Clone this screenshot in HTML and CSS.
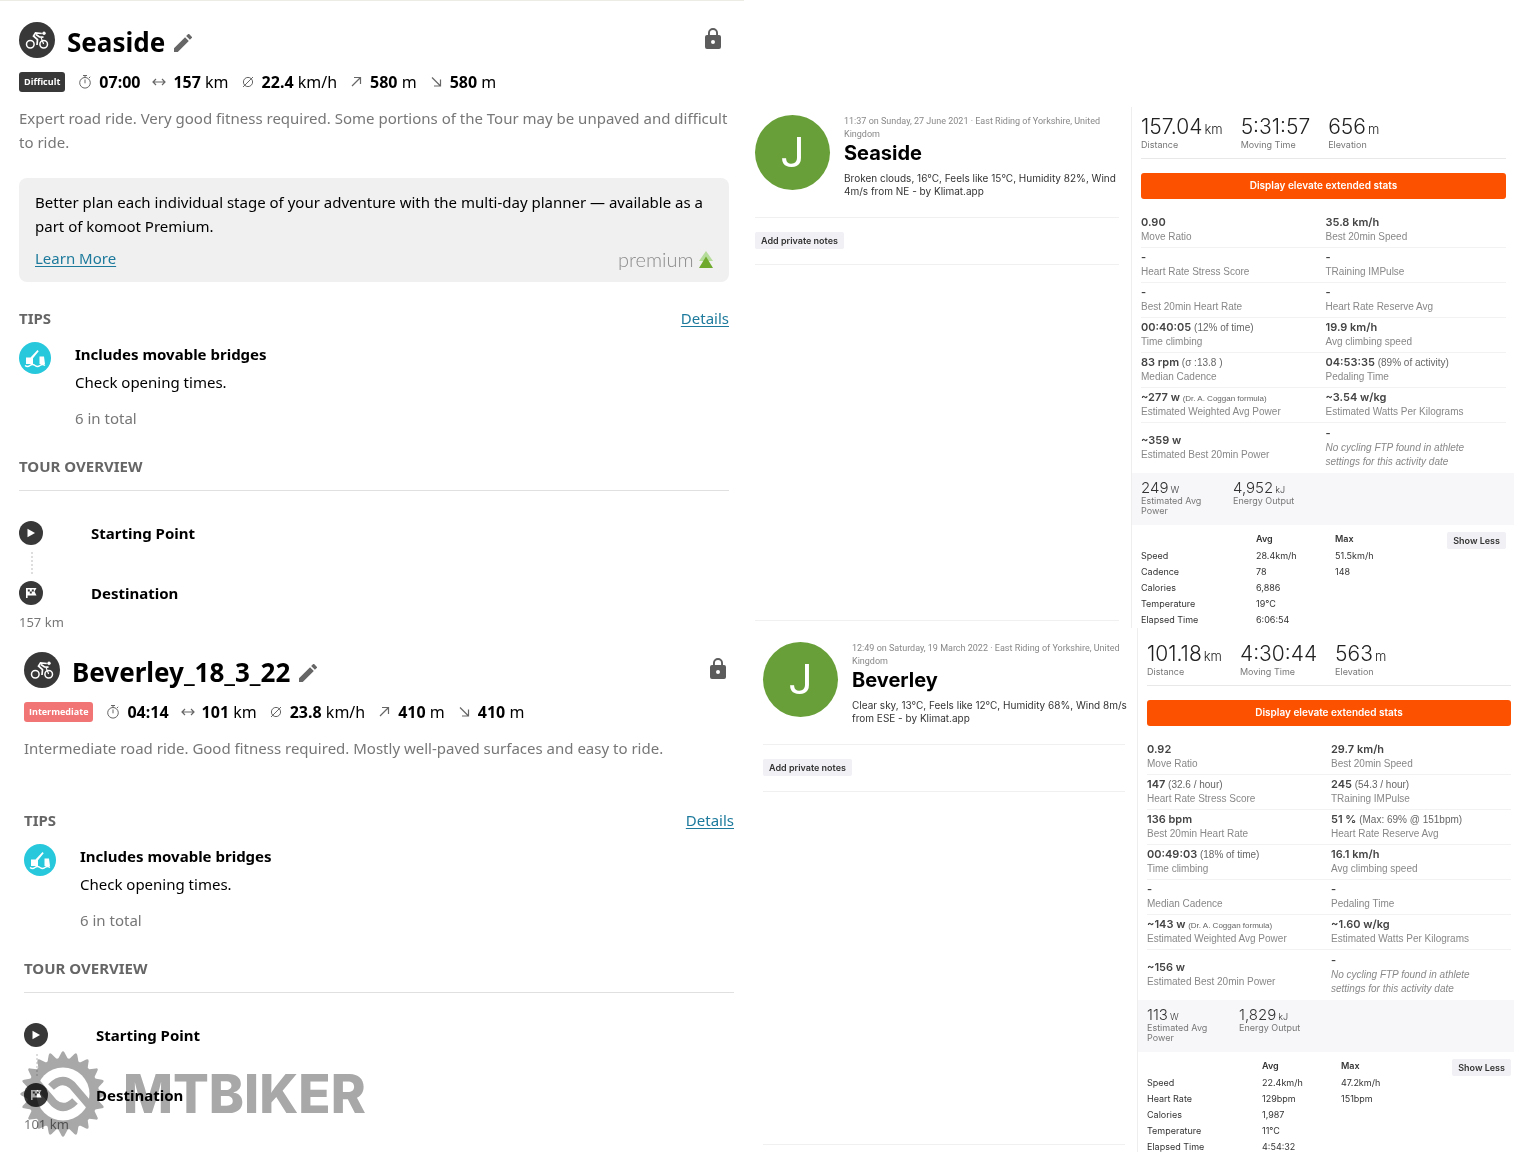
FILE: index.html
```html
<!DOCTYPE html>
<html lang="en">
<head>
  <meta charset="UTF-8" />
  <meta name="viewport" content="width=device-width, initial-scale=1.0" />
  <title>Seaside / Beverley - planned and ridden</title>
  <link rel="stylesheet" href="styles.css">
</head>
<body>

  <!-- Shared icons -->
  <svg class="sprite" aria-hidden="true">
    <symbol id="i-bike" viewBox="0 0 36 36">
      <circle cx="18" cy="18" r="18" fill="#383838"/>
      <g fill="none" stroke="#fff" stroke-width="1.5">
        <circle cx="11.3" cy="22.3" r="3.800"/>
        <circle cx="24.7" cy="22.3" r="3.800"/>
        <path d="M24.600 22 22 15.400" stroke-width="1.200"/>
        <path d="M22.800 11.500 16.500 11l-2 3 4 3.500-.5 5.500M17 12.500l3.500 2.500 4 .200" stroke-width="1.700"/>
      </g>
      <circle cx="25" cy="11.200" r="1.700" fill="#fff"/>
    </symbol>
    <symbol id="i-pencil" viewBox="3 3 18 18">
      <path d="M3 17.25V21h3.75L17.81 9.94l-3.75-3.75L3 17.25zM20.71 7.04a1 1 0 0 0 0-1.41l-2.34-2.34a1 1 0 0 0-1.41 0l-1.83 1.83 3.75 3.75 1.83-1.83z" fill="#666"/>
    </symbol>
    <symbol id="i-lock" viewBox="4 1 16 21">
      <path d="M18 8h-1V6A5 5 0 0 0 7 6v2H6a2 2 0 0 0-2 2v10a2 2 0 0 0 2 2h12a2 2 0 0 0 2-2V10a2 2 0 0 0-2-2zm-6 9a2 2 0 1 1 0-4 2 2 0 0 1 0 4zm3.1-9H8.900V6a3.100 3.100 0 0 1 6.200 0v2z" fill="#5c5c5c"/>
    </symbol>
    <symbol id="i-clock" viewBox="0 0 14 14">
      <g fill="none" stroke="#666"><circle cx="7" cy="7.800" r="5.300"/><path d="M5 .5h4M7 .5v2M7 4.500v3.800M11 3l1.200-1.200"/></g>
    </symbol>
    <symbol id="i-dist" viewBox="0 0 14 14">
      <path d="M1 7h12M4 4 1 7l3 3M10 4l3 3-3 3" fill="none" stroke="#666" stroke-width="1.200"/>
    </symbol>
    <symbol id="i-speed" viewBox="0 0 14 14">
      <g fill="none" stroke="#666"><circle cx="7" cy="7" r="4.600"/><path d="M2 12 12 2"/></g>
    </symbol>
    <symbol id="i-up" viewBox="0 0 14 14">
      <path d="M3 11 11 3M5 2.500h6.500V9" fill="none" stroke="#666" stroke-width="1.200"/>
    </symbol>
    <symbol id="i-down" viewBox="0 0 14 14">
      <path d="m3 2.500 8 8M5 11h6.500V4.500" fill="none" stroke="#666" stroke-width="1.200"/>
    </symbol>
    <symbol id="i-bridge" viewBox="0 0 32 32">
      <circle cx="16" cy="16" r="16" fill="#28c8dc"/>
      <path d="M7 15.500h4.500l7-7.500 1.200 1.200-5.700 7V22H7zM20.500 14.500H25l1 7.500h-5.500z" fill="#fff"/>
      <path d="M6 23.500q2.500 2 5 0t5 0 5 0 5 0" fill="none" stroke="#fff" stroke-width="1.400"/>
    </symbol>
    <symbol id="i-start" viewBox="0 0 24 24">
      <circle cx="12" cy="12" r="12" fill="#383838"/>
      <path d="M8.500 7.800v8.400l7.500-4.200z" fill="#fff"/>
    </symbol>
    <symbol id="i-flag" viewBox="0 0 24 24">
      <circle cx="12" cy="12" r="12" fill="#383838"/>
      <path d="M7 7h10.500l-2 3.500 2 4H8.600V17H7z" fill="#fff"/>
      <path d="M8.800 8.500h2v2h-2zM12.800 8.500h2v2h-2zM10.800 10.500h2v2h-2z" fill="#383838"/>
    </symbol>
  </svg>

  <main class="page">

    <!-- Planned tours -->
    <div class="tours">
      <article class="tour">
        <header class="tour-head">
          <svg class="sport"><use href="#i-bike"/></svg>
          <h1>Seaside</h1>
          <button class="icon-btn" aria-label="Edit name"><svg class="pencil"><use href="#i-pencil"/></svg></button>
          <button class="icon-btn lock-btn" aria-label="Private"><svg class="lock"><use href="#i-lock"/></svg></button>
        </header>
        <div class="facts">
          <span class="badge">Difficult</span>
          <span class="fact"><svg><use href="#i-clock"/></svg><b>07:00</b></span>
          <span class="fact"><svg><use href="#i-dist"/></svg><b>157</b> km</span>
          <span class="fact"><svg><use href="#i-speed"/></svg><b>22.4</b> km/h</span>
          <span class="fact"><svg><use href="#i-up"/></svg><b>580</b> m</span>
          <span class="fact"><svg><use href="#i-down"/></svg><b>580</b> m</span>
        </div>
        <p class="summary">Expert road ride. Very good fitness required. Some portions of the Tour may be unpaved and difficult to ride.</p>

        <aside class="banner">
          <p>Better plan each individual stage of your adventure with the multi-day planner — available as a part of komoot Premium.</p>
          <div class="banner-foot">
            <a href="#">Learn More</a>
            <span class="premium">premium
              <svg viewBox="0 0 14 17"><path d="M7 0 14 10H0z" fill="#b5dc9a"/><path d="M7 5.500 14 17H0z" fill="#6fa92e"/></svg>
            </span>
          </div>
        </aside>

        <div class="section-head"><h2>TIPS</h2><a href="#">Details</a></div>
        <div class="tip">
          <svg><use href="#i-bridge"/></svg>
          <div>
            <h3>Includes movable bridges</h3>
            <p>Check opening times.</p>
            <p class="total">6 in total</p>
          </div>
        </div>

        <h2 class="overview">TOUR OVERVIEW</h2>
        <ol class="route">
          <li><svg><use href="#i-start"/></svg>Starting Point</li>
          <li><svg><use href="#i-flag"/></svg>Destination</li>
        </ol>
        <p class="km">157 km</p>
      </article>

      <article class="tour tour-second">
        <header class="tour-head">
          <svg class="sport"><use href="#i-bike"/></svg>
          <h1>Beverley_18_3_22</h1>
          <button class="icon-btn" aria-label="Edit name"><svg class="pencil"><use href="#i-pencil"/></svg></button>
          <button class="icon-btn lock-btn" aria-label="Private"><svg class="lock"><use href="#i-lock"/></svg></button>
        </header>
        <div class="facts">
          <span class="badge badge-mid">Intermediate</span>
          <span class="fact"><svg><use href="#i-clock"/></svg><b>04:14</b></span>
          <span class="fact"><svg><use href="#i-dist"/></svg><b>101</b> km</span>
          <span class="fact"><svg><use href="#i-speed"/></svg><b>23.8</b> km/h</span>
          <span class="fact"><svg><use href="#i-up"/></svg><b>410</b> m</span>
          <span class="fact"><svg><use href="#i-down"/></svg><b>410</b> m</span>
        </div>
        <p class="summary">Intermediate road ride. Good fitness required. Mostly well-paved surfaces and easy to ride.</p>

        <div class="section-head"><h2>TIPS</h2><a href="#">Details</a></div>
        <div class="tip">
          <svg><use href="#i-bridge"/></svg>
          <div>
            <h3>Includes movable bridges</h3>
            <p>Check opening times.</p>
            <p class="total">6 in total</p>
          </div>
        </div>

        <h2 class="overview">TOUR OVERVIEW</h2>
        <ol class="route">
          <li><svg><use href="#i-start"/></svg>Starting Point</li>
          <li><svg><use href="#i-flag"/></svg>Destination</li>
        </ol>
        <p class="km">101 km</p>

        <!-- Watermark over the end of the tour -->
        <div class="watermark">
          <svg viewBox="-43 -43 86 86">
            <defs>
              <path id="tooth" d="M-5.500-34-1.500-41.500Q0-44 1.500-41.500L5.500-34z"/>
              <g id="teeth">
                <use href="#tooth"/>
                <use href="#tooth" transform="rotate(18)"/>
                <use href="#tooth" transform="rotate(36)"/>
                <use href="#tooth" transform="rotate(54)"/>
                <use href="#tooth" transform="rotate(72)"/>
              </g>
            </defs>
            <g fill="#a8a8a8">
              <use href="#teeth"/>
              <use href="#teeth" transform="rotate(90)"/>
              <use href="#teeth" transform="rotate(180)"/>
              <use href="#teeth" transform="rotate(270)"/>
              <circle r="36"/>
            </g>
            <circle r="26.500" fill="#fff"/>
            <g fill="none" stroke="#a8a8a8" stroke-width="8">
              <path id="link" d="M-12-7Q-1-18 9-9L27 12"/>
              <use href="#link" transform="rotate(180)"/>
            </g>
          </svg>
          <span>MTBIKER</span>
        </div>
      </article>
    </div>

    <!-- Recorded activities -->
    <div class="activities">
      <section class="activity">
        <div class="activity-head">
          <div class="avatar">J</div>
          <div>
            <p class="meta">11:37 on Sunday, 27 June 2021 · East Riding of Yorkshire, United Kingdom</p>
            <h2>Seaside</h2>
            <p class="weather">Broken clouds, 16°C, Feels like 15°C, Humidity 82%, Wind 4m/s from NE - by Klimat.app</p>
          </div>
        </div>
        <div class="notes"><button class="small-btn">Add private notes</button></div>
      </section>

      <section class="activity activity-second">
        <div class="activity-head">
          <div class="avatar">J</div>
          <div>
            <p class="meta">12:49 on Saturday, 19 March 2022 · East Riding of Yorkshire, United Kingdom</p>
            <h2>Beverley</h2>
            <p class="weather">Clear sky, 13°C, Feels like 12°C, Humidity 68%, Wind 8m/s from ESE - by Klimat.app</p>
          </div>
        </div>
        <div class="notes"><button class="small-btn">Add private notes</button></div>
      </section>
    </div>

    <!-- Activity stats -->
    <div class="stats-col">
      <section class="stats">
        <ul class="totals">
          <li><strong>157.04<small>km</small></strong>Distance</li>
          <li><strong>5:31:57</strong>Moving Time</li>
          <li><strong>656<small>m</small></strong>Elevation</li>
        </ul>
        <button class="elevate-btn">Display elevate extended stats</button>
        <table class="extended">
          <tr><td><b>0.90</b><br>Move Ratio</td><td><b>35.8 km/h</b><br>Best 20min Speed</td></tr>
          <tr><td><b>-</b><br>Heart Rate Stress Score</td><td><b>-</b><br>TRaining IMPulse</td></tr>
          <tr><td><b>-</b><br>Best 20min Heart Rate</td><td><b>-</b><br>Heart Rate Reserve Avg</td></tr>
          <tr><td><b>00:40:05</b> <span>(12% of time)</span><br>Time climbing</td><td><b>19.9 km/h</b><br>Avg climbing speed</td></tr>
          <tr><td><b>83 rpm</b> <span>(σ :13.8 )</span><br>Median Cadence</td><td><b>04:53:35</b> <span>(89% of activity)</span><br>Pedaling Time</td></tr>
          <tr><td><b>~277 w</b> <span class="tiny">(Dr. A. Coggan formula)</span><br>Estimated Weighted Avg Power</td><td><b>~3.54 w/kg</b><br>Estimated Watts Per Kilograms</td></tr>
          <tr><td><b>~359 w</b><br>Estimated Best 20min Power</td><td><b>-</b><br><i>No cycling FTP found in athlete<br>settings for this activity date</i></td></tr>
        </table>
        <ul class="power">
          <li><strong>249<small>W</small></strong>Estimated Avg Power</li>
          <li><strong>4,952<small>kJ</small></strong>Energy Output</li>
        </ul>
        <div class="more">
          <table>
            <tr><th></th><th>Avg</th><th>Max</th></tr>
            <tr><td>Speed</td><td>28.4km/h</td><td>51.5km/h</td></tr>
            <tr><td>Cadence</td><td>78</td><td>148</td></tr>
            <tr><td>Calories</td><td>6,886</td><td></td></tr>
            <tr><td>Temperature</td><td>19°C</td><td></td></tr>
            <tr><td>Elapsed Time</td><td>6:06:54</td><td></td></tr>
          </table>
          <button class="small-btn">Show Less</button>
        </div>
      </section>

      <section class="stats stats-second">
        <ul class="totals">
          <li><strong>101.18<small>km</small></strong>Distance</li>
          <li><strong>4:30:44</strong>Moving Time</li>
          <li><strong>563<small>m</small></strong>Elevation</li>
        </ul>
        <button class="elevate-btn">Display elevate extended stats</button>
        <table class="extended">
          <tr><td><b>0.92</b><br>Move Ratio</td><td><b>29.7 km/h</b><br>Best 20min Speed</td></tr>
          <tr><td><b>147</b> <span>(32.6 / hour)</span><br>Heart Rate Stress Score</td><td><b>245</b> <span>(54.3 / hour)</span><br>TRaining IMPulse</td></tr>
          <tr><td><b>136 bpm</b><br>Best 20min Heart Rate</td><td><b>51 %</b> <span>(Max: 69% @ 151bpm)</span><br>Heart Rate Reserve Avg</td></tr>
          <tr><td><b>00:49:03</b> <span>(18% of time)</span><br>Time climbing</td><td><b>16.1 km/h</b><br>Avg climbing speed</td></tr>
          <tr><td><b>-</b><br>Median Cadence</td><td><b>-</b><br>Pedaling Time</td></tr>
          <tr><td><b>~143 w</b> <span class="tiny">(Dr. A. Coggan formula)</span><br>Estimated Weighted Avg Power</td><td><b>~1.60 w/kg</b><br>Estimated Watts Per Kilograms</td></tr>
          <tr><td><b>~156 w</b><br>Estimated Best 20min Power</td><td><b>-</b><br><i>No cycling FTP found in athlete<br>settings for this activity date</i></td></tr>
        </table>
        <ul class="power">
          <li><strong>113<small>W</small></strong>Estimated Avg Power</li>
          <li><strong>1,829<small>kJ</small></strong>Energy Output</li>
        </ul>
        <div class="more">
          <table>
            <tr><th></th><th>Avg</th><th>Max</th></tr>
            <tr><td>Speed</td><td>22.4km/h</td><td>47.2km/h</td></tr>
            <tr><td>Heart Rate</td><td>129bpm</td><td>151bpm</td></tr>
            <tr><td>Calories</td><td>1,987</td><td></td></tr>
            <tr><td>Temperature</td><td>11°C</td><td></td></tr>
            <tr><td>Elapsed Time</td><td>4:54:32</td><td></td></tr>
          </table>
          <button class="small-btn">Show Less</button>
        </div>
      </section>
    </div>

  </main>
</body>
</html>
```
FILE: styles.css
```css
* {
  box-sizing: border-box;
}
body {
  margin: 0;
  background: #fff;
  color: #000;
  font-family: "Noto Sans", sans-serif;
  font-size: 15px;
  line-height: 24px;
}
h1, h2, h3, p, ul, ol {
  margin: 0;
  padding: 0;
}
ul, ol {
  list-style: none;
}
button {
  border: none;
  font-family: inherit;
  cursor: pointer;
}
a {
  color: #1d7a9c;
  text-underline-offset: 2px;
}
.sprite {
  position: absolute;
  width: 0;
  height: 0;
}
.page {
  display: grid;
  grid-template-columns: 744fr 387fr 383fr;
}

/* Planned tours */
.tour {
  padding: 21px 15px 0 19px;
  border-top: 1px solid #ecece4;
}
.tour-second {
  position: relative;
  padding: 20px 10px 0 24px;
  border-top: none;
}
.tour-head {
  display: flex;
  align-items: center;
  height: 36px;
  margin-bottom: 12px;
}
.sport {
  width: 36px;
  height: 36px;
  margin-right: 12px;
}
.tour-head h1 {
  padding-top: 4px;
  font-size: 26px;
  line-height: 36px;
}
.icon-btn {
  display: flex;
  padding: 0;
  background: none;
}
.pencil {
  width: 18px;
  height: 18px;
  margin: 6px 0 0 9px;
}
.lock-btn {
  margin: 0 8px 4px auto;
}
.lock {
  width: 16px;
  height: 21px;
}
.facts {
  display: flex;
  align-items: center;
  height: 24px;
  margin-bottom: 12px;
  font-size: 16px;
}
.badge {
  padding: 0 5px;
  margin-right: 13px;
  border-radius: 3px;
  background: #383838;
  color: #fff;
  font: bold 9px/20px "Open Sans", sans-serif;
}
.badge-mid {
  background: #f17575;
}
.fact {
  margin-right: 12px;
  white-space: nowrap;
}
.fact svg {
  width: 14px;
  height: 14px;
  margin-right: 7px;
  vertical-align: -1px;
}
.summary {
  margin-bottom: 24px;
  color: #777;
}
.tour-second .summary {
  margin-bottom: 48px;
}
.banner {
  padding: 12px 16px;
  border-radius: 8px;
  background: #f0f0f0;
}
.banner-foot {
  display: flex;
  justify-content: space-between;
  height: 24px;
  margin-top: 8px;
}
.premium {
  color: #8c8c8c;
  font: 300 20px/26px Lato, sans-serif;
}
.premium svg {
  width: 14px;
  height: 17px;
  vertical-align: -1px;
}
.section-head {
  display: flex;
  justify-content: space-between;
  margin: 24px 0 12px;
}
.tour h2 {
  color: #666;
  font-size: 15px;
  line-height: 24px;
}
.tip {
  display: flex;
  gap: 24px;
}
.tip svg {
  width: 32px;
  height: 32px;
}
.tip h3 {
  margin-bottom: 4px;
  font-size: 15px;
}
.total {
  margin-top: 12px;
  color: #777;
}
.tour .overview {
  margin-top: 24px;
  padding-bottom: 12px;
  border-bottom: 1px solid #e0e0e0;
}
.route {
  padding-top: 30px;
}
.route li {
  display: flex;
  align-items: center;
  gap: 48px;
  height: 24px;
  font-weight: bold;
}
.route svg {
  width: 24px;
  height: 24px;
}
.route li:first-child {
  margin-bottom: 36px;
}
.route li:first-child::after {
  content: "";
  order: -1;
  align-self: flex-start;
  height: 22px;
  margin: 31px -62px 0 12px;
  border-left: 2px dotted #ddd;
}
.km {
  margin-top: 7px;
  color: #777;
  font-size: 13px;
  line-height: 20px;
}
.watermark {
  position: absolute;
  left: 20px;
  bottom: -3px;
  display: flex;
  align-items: center;
  gap: 17px;
  color: #a8a8a8;
  font: 800 53px/86px Inter, sans-serif;
  mix-blend-mode: multiply;
}
.watermark svg {
  width: 86px;
  height: 86px;
}

/* Recorded activities */
.activities,
.stats-col {
  font-family: Inter, sans-serif;
  font-size: 9px;
  line-height: 14px;
}
.activity {
  height: 621px;
  padding-top: 115px;
  margin: 0 12px 0 11px;
  border-bottom: 1px solid #f0f0f0;
}
.activity-second {
  height: 524px;
  padding-top: 21px;
  margin: 0 6px 0 19px;
}
.activity-head {
  display: flex;
  gap: 14px;
  height: 103px;
  border-bottom: 1px solid #f0f0f0;
}
.avatar {
  flex: none;
  width: 75px;
  height: 75px;
  border-radius: 50%;
  background: #689f38;
  color: #fff;
  font: 42px/75px Roboto, sans-serif;
  text-align: center;
}
.meta {
  color: #888;
  font-family: Roboto, sans-serif;
  line-height: 13px;
}
.activity h2 {
  margin-bottom: 6px;
  font-size: 20px;
  line-height: 25px;
}
.weather {
  margin-right: -5px;
  color: #333;
  font-size: 10px;
  line-height: 13px;
}
.notes {
  padding: 14px 0 15px;
  border-bottom: 1px solid #f0f0f0;
}
.small-btn {
  display: block;
  padding: 0 6px;
  border-radius: 2px;
  background: #f0f0f5;
  color: #333;
  font-size: 9px;
  font-weight: 600;
  line-height: 17px;
}

/* Activity stats */
.stats {
  margin-top: 107px;
  padding: 8px 8px 0 9px;
  border-left: 1px solid #eee;
}
.stats-second {
  margin: 0 0 0 6px;
  padding: 14px 3px 0 9px;
}
.totals {
  display: flex;
  gap: 18px;
  height: 44px;
  margin-bottom: 14px;
  border-bottom: 1px solid #e8e8e8;
  color: #777;
}
.totals strong {
  display: block;
  color: #222;
  font-size: 21px;
  font-weight: 300;
  line-height: 23px;
}
.totals small {
  margin-left: 2px;
  font-size: 13px;
  line-height: 1;
}
.elevate-btn {
  width: 100%;
  height: 26px;
  padding: 0 0 2px;
  border-radius: 3px;
  background: #fc5200;
  color: #fff;
  font-size: 10px;
  font-weight: 600;
}
.extended {
  width: 100%;
  margin-top: 14px;
  border-spacing: 0;
  table-layout: fixed;
  color: #888;
  font: 10px/14px "Liberation Sans", sans-serif;
}
.extended td {
  height: 35px;
  padding: 2px 0;
  border-bottom: 1px solid #f2f2f2;
}
.extended td:last-child {
  padding-left: 2px;
}
.extended tr:last-child td {
  height: 50px;
  border-bottom: none;
}
.extended b {
  color: #444;
  font: 600 11px/12px Inter, sans-serif;
}
.extended span {
  color: #666;
}
.extended .tiny {
  font-size: 8px;
  line-height: 12px;
}
.power {
  display: flex;
  height: 52px;
  margin: 0 -8px 0 -9px;
  padding: 7px 9px;
  background: #f7f7fa;
  color: #777;
  line-height: 10px;
}
.power li {
  width: 92px;
  padding-right: 24px;
}
.power li:last-child {
  padding-right: 0;
}
.stats-second .power {
  margin-right: -3px;
}
.power strong {
  display: block;
  color: #333;
  font-size: 15px;
  font-weight: 300;
  line-height: 16px;
}
.power small {
  margin-left: 2px;
  font-size: 9px;
  line-height: 1;
}
.more {
  display: flex;
  justify-content: space-between;
  align-items: flex-start;
  padding-top: 5px;
}
.more table {
  border-collapse: collapse;
  color: #333;
}
.more th,
.more td {
  width: 79px;
  height: 16px;
  padding: 0;
  text-align: left;
}
.more th {
  height: 18px;
  font-weight: 600;
}
.more th:first-child {
  width: 115px;
}
.more .small-btn {
  margin-top: 2px;
}
```
